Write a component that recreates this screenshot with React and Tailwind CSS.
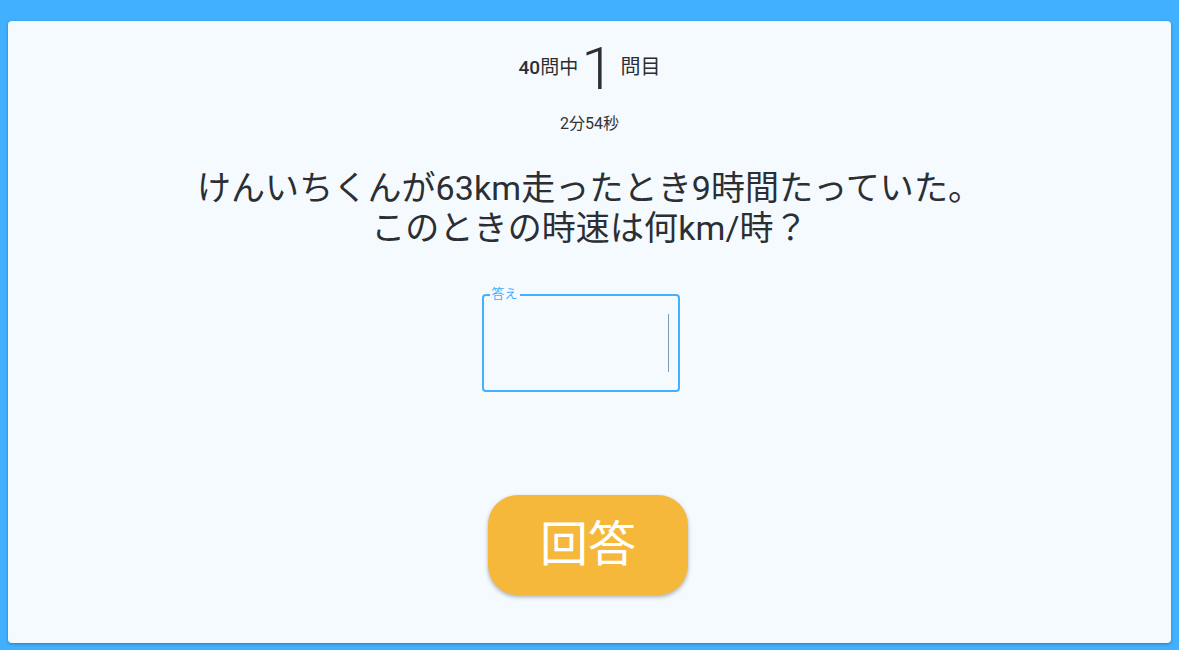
export default function App() {
  const jp = { fontFamily: 'Roboto, "Noto Sans CJK JP", sans-serif' };
  return (
    <div className="w-[1179px] h-[650px] bg-[#40b0ff] pt-[21px] px-[8px] pb-[7px]" style={jp}>
      <div className="h-[622px] bg-[#f5faff] rounded-[4px] shadow-[0_1px_3px_rgba(0,0,0,0.3)] flex flex-col items-center text-[#2b2f33]">
        <div className="mt-[18px] flex items-center h-[60px]">
          <span className="text-[19px] font-medium leading-none mb-[4px]">40</span>
          <span className="text-[19px] leading-none mb-[4px]">問中</span>
          <span className="text-[60px] font-light leading-[60px] ml-[3px] mr-[6px]">1</span>
          <span className="text-[20px] leading-none mb-[4px]">問目</span>
        </div>
        <div className="mt-[17px] text-[16px] leading-none text-[#333]">2分54秒</div>
        <div className="mt-[36px] text-[34px] leading-[40px] text-center text-[#2b2f33] tracking-[0.1px]">
          けんいちくんが63km走ったとき9時間たっていた。
          <br />
          このときの時速は何km/時？
        </div>
        <div className="mt-[46px] mr-[18px] relative w-[198px] h-[98px] border-2 border-[#42b0ff] rounded-[4px]">
          <span className="absolute left-[6px] top-[-10px] px-[2px] bg-[#f5faff] text-[13px] leading-[16px] text-[#42b0ff]">答え</span>
          <div className="absolute left-[184px] top-[18px] w-px h-[58px] bg-[#7a9ab5]" />
        </div>
        <button className="mt-[103px] mr-[3px] w-[200px] h-[100px] rounded-[30px] bg-[#f5b83b] text-white text-[48px] leading-none shadow-[0_2px_4px_rgba(0,0,0,0.3)]">
          回答
        </button>
      </div>
    </div>
  );
}
